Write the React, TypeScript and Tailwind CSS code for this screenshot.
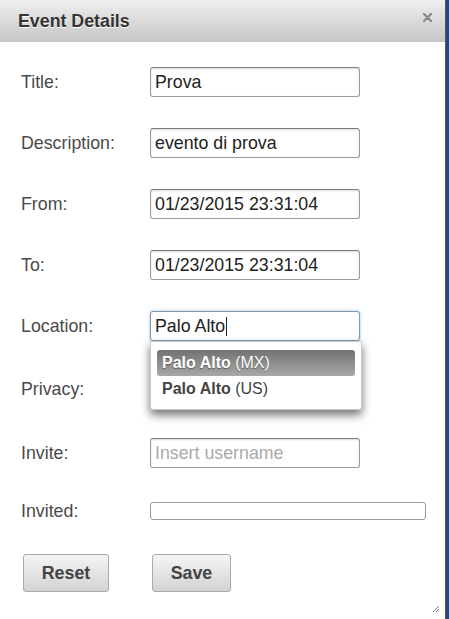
import React from "react";

const font = { fontFamily: '"Liberation Sans", Arial, Helvetica, sans-serif' };

const inputCls =
  "block w-[210px] h-[30px] px-[4px] text-[17.8px] text-[#222] bg-white border border-[#9a9a9a] border-t-[#7d7d7d] rounded-[3px] shadow-[inset_0_1px_2px_rgba(0,0,0,0.15)] outline-none";

function Row({ label, children, className }: { label: string; children: React.ReactNode; className?: string }) {
  return (
    <div className={"flex items-center " + (className ?? "")}>
      <div className="w-[129px] text-[17.8px] text-[#4a4a4a]">{label}</div>
      {children}
    </div>
  );
}

export default function App() {
  return (
    <div className="flex w-[449px] h-[619px] overflow-hidden bg-[#25467f]" style={font}>
      <div className="relative w-[446px] h-[619px] bg-white border-r border-[#555]">
        {/* header */}
        <div className="flex items-center justify-between h-[42px] pl-[18px] pr-[13px] bg-gradient-to-b from-[#efefef] to-[#c6c6c6]">
          <span className="text-[17.8px] font-bold text-[#333] [text-shadow:0_1px_0_#fff]">Event Details</span>
          <svg width="9" height="9" viewBox="0 0 9 9" className="mb-[8px]">
            <path d="M1 1L8 8M8 1L1 8" stroke="#8a8a8a" strokeWidth="2.4" strokeLinecap="round" />
          </svg>
        </div>

        <div className="pl-[21px] pt-[25px]">
          <Row label="Title:" className="h-[30px]">
            <input readOnly value="Prova" className={inputCls} />
          </Row>
          <Row label="Description:" className="h-[30px] mt-[31px]">
            <input readOnly value="evento di prova" className={inputCls} />
          </Row>
          <Row label="From:" className="h-[30px] mt-[31px]">
            <input readOnly value="01/23/2015 23:31:04" className={inputCls} />
          </Row>
          <Row label="To:" className="h-[30px] mt-[31px]">
            <input readOnly value="01/23/2015 23:31:04" className={inputCls} />
          </Row>
          <Row label="Location:" className="h-[30px] mt-[31px]">
            <div className="flex items-center w-[210px] h-[30px] px-[4px] text-[17.8px] text-[#222] bg-white border border-[#7f98aa] rounded-[3px] shadow-[0_0_3px_rgba(90,140,190,0.6)]">
              Palo Alto
              <span className="inline-block w-px h-[19px] bg-[#222] ml-px" />
            </div>
          </Row>
          <Row label="Privacy:" className="h-[34px] mt-[31px]">
            <div className="w-[210px] h-[34px] rounded-[3px] border border-[#aaa] bg-[#f4f4f4]" />
          </Row>
          <Row label="Invite:" className="h-[30px] mt-[32px]">
            <input readOnly placeholder="Insert username" className={inputCls + " placeholder:text-[#aaa]"} />
          </Row>
          <Row label="Invited:" className="h-[18px] mt-[34px]">
            <div className="w-[276px] h-[18px] bg-white border border-[#9a9a9a] rounded-[3px]" />
          </Row>

          <div className="flex mt-[34px] pl-[2px] gap-[43px]">
            <button className="w-[86px] h-[38px] rounded-[3px] border border-[#a9a9a9] bg-gradient-to-b from-[#f5f5f5] to-[#d3d3d3] text-[17.8px] font-bold text-[#444]">
              Reset
            </button>
            <button className="w-[79px] h-[38px] rounded-[3px] border border-[#a9a9a9] bg-gradient-to-b from-[#f5f5f5] to-[#d3d3d3] text-[17.8px] font-bold text-[#444]">
              Save
            </button>
          </div>
        </div>

        {/* autocomplete menu */}
        <div className="absolute left-[150px] top-[341px] w-[212px] h-[69px] bg-white border border-[#c8c8c8] rounded-b-[3px] shadow-[0_5px_10px_rgba(0,0,0,0.55)] px-[6px] pt-[8px]">
          <div className="flex items-center h-[26px] px-[5px] rounded-[3px] bg-gradient-to-b from-[#727272] to-[#a8a8a8] text-[16px] text-white [text-shadow:0_1px_1px_rgba(0,0,0,0.4)]">
            <b>Palo Alto</b>&nbsp;(MX)
          </div>
          <div className="flex items-center h-[26px] px-[5px] text-[16px] text-[#444]">
            <b>Palo Alto</b>&nbsp;(US)
          </div>
        </div>

        {/* resize grip */}
        <svg width="8" height="8" viewBox="0 0 8 8" className="absolute right-[5px] bottom-[6px]">
          <path d="M7 1L1 7M7 4L4 7M7 6.5L6.5 7" stroke="#777" strokeWidth="1" />
        </svg>
      </div>
    </div>
  );
}
